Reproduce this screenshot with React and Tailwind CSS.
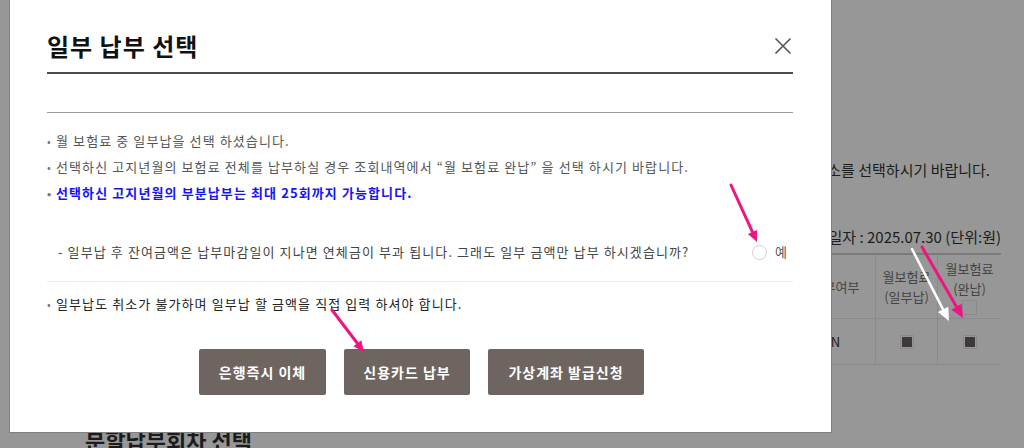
const font = { fontFamily: '"Noto Sans CJK KR", "Noto Sans", sans-serif' }

function Arrow({ x1, y1, x2, y2, color, width = 3, head = 11 }) {
  const ang = Math.atan2(y2 - y1, x2 - x1)
  const bx = x2 - head * Math.cos(ang)
  const by = y2 - head * Math.sin(ang)
  const px = Math.sin(ang) * head * 0.45
  const py = -Math.cos(ang) * head * 0.45
  return (
    <g>
      <line x1={x1} y1={y1} x2={bx} y2={by} stroke={color} strokeWidth={width} strokeLinecap="round" />
      <polygon points={`${x2},${y2} ${bx + px},${by + py} ${bx - px},${by - py}`} fill={color} />
    </g>
  )
}

function Bullet({ children, className = '' }) {
  return (
    <li className={`flex items-center h-[26px] ${className}`}>
      <span className="w-[9px] text-[11px] tracking-normal text-[#777]">•</span>
      <span>{children}</span>
    </li>
  )
}

export default function App() {
  return (
    <div className="relative h-[448px] w-[1024px] overflow-hidden bg-[#979797]" style={font}>
      {/* page behind the overlay */}
      <div className="flex flex-col items-end pt-[158px] pr-[23px]">
        <p className="h-[24px] pr-[11px] text-[15px] leading-[24px] text-[#1c1c1c]">
          납부하실 회차와 장소를 선택하시기 바랍니다.
        </p>
        <p className="mt-[43px] h-[24px] text-[15px] leading-[24px] text-[#1c1c1c]">
          납부 기준일자 : 2025.07.30 (단위:원)
        </p>
        <div className="mt-[4px] grid grid-cols-[80px_62px_63px] border-t-2 border-[#7a7a7a] text-[13px] text-[#444]">
          <div className="flex h-[64px] items-center justify-center border-b border-r border-[#8a8a8a]">납부여부</div>
          <div className="flex h-[64px] flex-col items-center justify-center border-b border-r border-[#8a8a8a] leading-[20px]">
            <span>월보험료</span>
            <span>(일부납)</span>
          </div>
          <div className="flex h-[64px] flex-col items-center justify-center border-b border-[#8a8a8a] leading-[20px]">
            <span>월보험료</span>
            <span>(완납)</span>
            <span className="mt-[1px] h-[15px] w-[15px] border border-[#8a8a8a]" />
          </div>
          <div className="flex h-[46px] items-center justify-center border-b border-r border-[#8a8a8a] text-[#1c1c1c]">N</div>
          <div className="flex h-[46px] items-center justify-center border-b border-r border-[#8a8a8a]">
            <span className="flex h-[14px] w-[14px] items-center justify-center border border-[#8a8a8a]">
              <span className="h-[10px] w-[10px] bg-[#3f3a3a]" />
            </span>
          </div>
          <div className="flex h-[46px] items-center justify-center border-b border-[#8a8a8a]">
            <span className="flex h-[14px] w-[14px] items-center justify-center border border-[#8a8a8a]">
              <span className="h-[10px] w-[10px] bg-[#3f3a3a]" />
            </span>
          </div>
        </div>
      </div>
      <h2 className="mt-[60px] pl-[85px] text-[22px] font-bold leading-[28px] text-[#1c1c1c]">분할납부회차 선택</h2>

      {/* modal */}
      <div className="absolute left-[9px] top-[-40px] h-[473px] w-[823px] border border-[#808080] bg-white pl-[37px] pr-[38px] pt-[69px]">
        <div className="flex h-[32px] items-center justify-between">
          <h1 className="text-[24px] font-bold leading-[32px] tracking-[1px] text-[#111]">일부 납부 선택</h1>
          <svg width="18" height="18" viewBox="0 0 18 18" className="mr-[1px]">
            <path d="M1.5 1.5 L16.5 16.5 M16.5 1.5 L1.5 16.5" stroke="#555" strokeWidth="1.6" fill="none" />
          </svg>
        </div>
        <div className="mt-[10px] h-[2px] bg-[#4a4a4a]" />
        <div className="mt-[38px] h-px bg-[#9a9a9a]" />
        <ul className="mt-[15px] text-[13px] tracking-[1.1px] text-[#555]">
          <Bullet>월 보험료 중 일부납을 선택 하셨습니다.</Bullet>
          <Bullet>선택하신 고지년월의 보험료 전체를 납부하실 경우 조회내역에서 “월 보험료 완납” 을 선택 하시기 바랍니다.</Bullet>
          <Bullet className="font-bold text-[#1515f0]">선택하신 고지년월의 부분납부는 최대 25회까지 가능합니다.</Bullet>
        </ul>
        <div className="mt-[33px] flex h-[26px] items-center pl-[11px] text-[13px] tracking-[1.1px] text-[#444]">
          <span className="flex-1">- 일부납 후 잔여금액은 납부마감일이 지나면 연체금이 부과 됩니다. 그래도 일부 금액만 납부 하시겠습니까?</span>
          <label className="flex items-center gap-[8px] pr-[5px]">
            <span className="h-[15px] w-[15px] rounded-full border-[1.5px] border-[#cfcfcf]" />
            <span className="text-[#555]">예</span>
          </label>
        </div>
        <div className="mt-[16px] h-px bg-[#ececec]" />
        <ul className="mt-[9px] text-[13px] tracking-[1.1px] text-[#222]">
          <Bullet>일부납도 취소가 불가하며 일부납 할 금액을 직접 입력 하셔야 합니다.</Bullet>
        </ul>
        <div className="mt-[32px] flex gap-[18px] pl-[152px] text-[14px] font-bold tracking-[1px] text-white">
          <button className="h-[46px] w-[127px] rounded-[2px] bg-[#6f6560]">은행즉시 이체</button>
          <button className="h-[46px] w-[126px] rounded-[2px] bg-[#6f6560]">신용카드 납부</button>
          <button className="h-[46px] w-[156px] rounded-[2px] bg-[#6f6560]">가상계좌 발급신청</button>
        </div>
      </div>

      {/* annotation arrows */}
      <svg className="pointer-events-none absolute inset-0" width="1024" height="448">
        <Arrow x1={731} y1={185} x2={757} y2={242} color="#f01480" />
        <Arrow x1={332} y1={310} x2={364} y2={352} color="#f01480" />
        <Arrow x1={912} y1={249} x2={949} y2={321} color="#ffffff" width={2.5} head={13} />
        <Arrow x1={922} y1={247} x2={963} y2={318} color="#f01480" width={3} head={13} />
      </svg>
    </div>
  )
}
